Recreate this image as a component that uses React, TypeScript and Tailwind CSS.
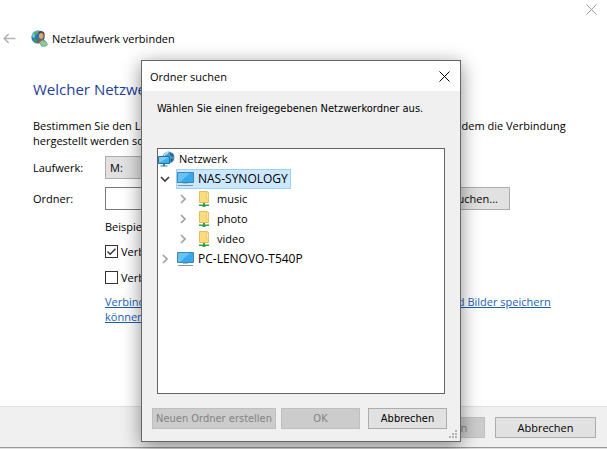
import clsx from 'clsx';
import type { ButtonHTMLAttributes } from 'react';

const CloseIcon = ({ className }: { className?: string }) => (
    <svg width="11" height="11" viewBox="0 0 11 11" fill="none" stroke="currentColor" className={className} aria-hidden="true">
        <path d="M.5.5l10 10M10.5.5l-10 10" />
    </svg>
);

const BackIcon = () => (
    <svg width="13" height="11" viewBox="0 0 13 11" fill="none" stroke="currentColor" strokeWidth="1.6" aria-hidden="true">
        <path d="M12.5 5.5H1.2M5.7 1L1.2 5.5l4.5 4.5" />
    </svg>
);

const MapDriveIcon = () => (
    <svg width="17" height="17" viewBox="0 0 17 17" aria-hidden="true">
        <circle cx="7" cy="7" r="6.6" fill="#2378b8" />
        <path d="M1 4.6C2.6 1.6 5.4.4 8 .6L6.6 3.4 4 5.2 3.6 8 1.6 7.4z" fill="#79c8e6" />
        <path d="M3 2.6l3-1.7 1.6 1.2L5 4.6 2.6 5.2z" fill="#58ad54" />
        <path d="M2 8.4l2.6.4 1.6 2-.6 2.4C3.6 12.6 2.2 10.8 2 8.4z" fill="#3f9a4a" />
        <path d="M7.4 4.2C7.6 1.6 9.2.8 11 1.2c2.2.4 3 2.2 2.6 4.6L12.4 9H8.6z" fill="#5f4634" />
        <ellipse cx="10.2" cy="6" rx="2.3" ry="3" fill="#d9a784" />
        <path d="M6.4 12c.4-2.4 1.6-3.2 3.4-3.2 2 0 4.2 1.2 4.8 3.4l-3 2.2z" fill="#a5533c" />
        <path d="M8.6 12.2l3-2.2 1.6 1.2 1.4-.2 2 3.8-2.6 1.6-3.6-.2z" fill="#8fc8a0" stroke="#5c9a70" strokeWidth=".6" />
    </svg>
);

const NetworkIcon = () => (
    <svg width="17" height="16" viewBox="0 0 17 16" aria-hidden="true">
        <circle cx="10.5" cy="6.5" r="6" fill="#4a9cc9" />
        <path d="M5.5 3.8C7 1.4 9 .6 11 .6L9.6 3l-2 .8L6.4 6z" fill="#b9dfee" />
        <path d="M11.6 2l3 .4 1.6 3-2 .4-1.8-1.4zM12.8 7.6l2.8.2-1.6 3.4-1.4-.8z" fill="#28658f" />
        <path d="M.5 5.5h11v7H.5z" fill="#3fb0f0" stroke="#256f9f" />
        <path d="M1 6h10L1 12z" fill="#7accf8" />
        <path d="M5 13h2v1.5h2.5v1h-7v-1H5z" fill="#3b7ea6" />
    </svg>
);

const ComputerIcon = () => (
    <svg width="17" height="16" viewBox="0 0 17 16" aria-hidden="true">
        <path d="M.5 1.5h16v10H.5z" fill="#35aaf0" stroke="#4585a8" />
        <path d="M1 2h12L3 11H1z" fill="#65c3f7" />
        <path d="M6 12h5v1H6z" fill="#9fc4d8" />
        <path d="M1 14.5h15" stroke="#7f98a6" />
    </svg>
);

const SharedFolderIcon = () => (
    <svg width="12" height="16" viewBox="0 0 12 16" aria-hidden="true">
        <path d="M1.5.5h7l2 1v10h-9z" fill="#fbdc7c" stroke="#e6bd55" />
        <path d="M8.5 1v6.5l2 1V1.5z" fill="#fdebaa" stroke="#e6bd55" strokeWidth=".7" />
        <path d="M5 12h2v1.5h4V15H7.5v1h-3v-1H1v-1.5h4z" fill="#35a14a" />
    </svg>
);

const Chevron = ({ open }: { open?: boolean }) => (
    <svg
        width="10"
        height="10"
        viewBox="0 0 10 10"
        fill="none"
        strokeWidth="1.7"
        className={open ? 'stroke-[#404040]' : 'stroke-[#a0a0a0]'}
        aria-hidden="true"
    >
        <path d={open ? 'M1 3l4 4 4-4' : 'M3 1l4 4-4 4'} />
    </svg>
);

const ResizeGrip = () => (
    <svg width="9" height="9" viewBox="0 0 9 9" fill="#b4b4b4" className="absolute right-0.5 bottom-0.5" aria-hidden="true">
        <path d="M6 0h2v2H6zM3 3h2v2H3zM6 3h2v2H6zM0 6h2v2H0zM3 6h2v2H3zM6 6h2v2H6z" />
    </svg>
);

const Button = ({ className, ...props }: ButtonHTMLAttributes<HTMLButtonElement>) => (
    <button
        type="button"
        className={clsx(
            'border border-[#adadad] bg-[#e1e1e1] whitespace-nowrap disabled:border-[#bfbfbf] disabled:bg-[#cccccc] disabled:text-[#838383]',
            className
        )}
        {...props}
    />
);

const shares = ['music', 'photo', 'video'];

const NetworkTree = () => (
    <ul className="h-[246px] border border-[#646464] bg-white leading-5">
        <li>
            <div className="flex items-center gap-1">
                <NetworkIcon />
                Netzwerk
            </div>
            <ul>
                <li>
                    <div className="flex items-center gap-1 pl-0.5 text-[12px]">
                        <Chevron open />
                        <div className="ml-0.5 flex h-5 items-center gap-1 border border-[#99d1ff] bg-[#cce8ff] pr-0.5">
                            <ComputerIcon />
                            NAS-SYNOLOGY
                        </div>
                    </div>
                    <ul>
                        {shares.map((share) => (
                            <li key={share} className="flex items-center gap-2 pl-5">
                                <Chevron />
                                <span className="flex items-center gap-[7px] pl-0.5">
                                    <SharedFolderIcon />
                                    {share}
                                </span>
                            </li>
                        ))}
                    </ul>
                </li>
                <li className="flex items-center gap-1 pl-0.5 text-[12px]">
                    <Chevron />
                    <span className="flex items-center gap-1 pl-[3px]">
                        <ComputerIcon />
                        PC-LENOVO-T540P
                    </span>
                </li>
            </ul>
        </li>
    </ul>
);

const BrowseDialog = () => (
    <div
        role="dialog"
        aria-labelledby="browse-title"
        className="absolute top-[60px] right-[5px] left-0 mx-auto w-[320px] border border-[#666666] bg-[#f0f0f0] shadow-[0_4px_18px_rgba(0,0,0,0.45)]"
    >
        <header className="flex h-[30px] items-center justify-between bg-white pr-2.5 pl-2">
            <h2 id="browse-title">Ordner suchen</h2>
            <button type="button" aria-label="Schließen">
                <CloseIcon />
            </button>
        </header>
        <div className="px-[15px] pt-2.5">
            <p className="h-[47px] font-['DejaVu_Sans_Condensed','DejaVu_Sans',sans-serif] leading-4">
                Wählen Sie einen freigegebenen Netzwerkordner aus.
            </p>
            <NetworkTree />
        </div>
        <footer className="flex px-2.5 pt-3.5 pb-3 font-['DejaVu_Sans_Condensed','DejaVu_Sans',sans-serif]">
            <Button disabled className="h-[21px] w-[124px]">
                Neuen Ordner erstellen
            </Button>
            <Button disabled className="ml-[5px] h-[21px] w-[79px]">
                OK
            </Button>
            <Button className="ml-2 h-[21px] w-[79px]">Abbrechen</Button>
        </footer>
        <ResizeGrip />
    </div>
);

const Checkbox = ({ label, defaultChecked }: { label: string; defaultChecked?: boolean }) => (
    <label className="flex items-center gap-[3px]">
        <span className="grid">
            <input
                type="checkbox"
                defaultChecked={defaultChecked}
                className="peer col-start-1 row-start-1 size-[13px] appearance-none border border-[#333333] bg-white"
            />
            <svg
                width="13"
                height="13"
                viewBox="0 0 13 13"
                fill="none"
                stroke="#333333"
                strokeWidth="1.4"
                className="pointer-events-none invisible col-start-1 row-start-1 peer-checked:visible"
                aria-hidden="true"
            >
                <path d="M2.5 6.5l2.7 2.7 5.3-5.4" />
            </svg>
        </span>
        {label}
    </label>
);

export default function App() {
    return (
        <div className="relative flex min-h-screen flex-col bg-white font-['Open_Sans','Noto_Sans',sans-serif] text-[11px] leading-[15px] text-black">
            <div className="flex h-[30px] justify-end pt-1 pr-2.5">
                <button type="button" aria-label="Schließen" className="h-[11px] text-[#999999]">
                    <CloseIcon />
                </button>
            </div>
            <header className="flex h-[17px] items-center gap-[15px] pl-[3px]">
                <button type="button" aria-label="Zurück" className="text-[#b4b4b4]">
                    <BackIcon />
                </button>
                <h1 className="flex items-center gap-1">
                    <MapDriveIcon />
                    Netzlaufwerk verbinden
                </h1>
            </header>
            <main className="flex-1 px-[33px] pt-8">
                <h2 className="text-[15px] leading-5 text-[#1e3f98]">Welcher Netzwerkordner soll zugeordnet werden?</h2>
                <p className="pt-[19px]">
                    Bestimmen Sie den Laufwerkbuchstaben für die Verbindung sowie den Ordner, mit dem die Verbindung
                    hergestellt werden soll:
                </p>
                <div className="grid grid-cols-[72px_1fr] items-center gap-y-2 pt-2">
                    <label htmlFor="drive">Laufwerk:</label>
                    <select id="drive" className="h-[23px] w-[240px] appearance-none border border-[#adadad] bg-[#e1e1e1] pl-1">
                        <option>M:</option>
                    </select>
                    <label htmlFor="folder">Ordner:</label>
                    <div className="flex gap-3">
                        <input id="folder" type="text" className="h-[23px] w-[292px] border border-[#7a7a7a] bg-white px-1" />
                        <Button className="h-[23px] w-[101px]">Durchsuchen...</Button>
                    </div>
                    <div className="col-start-2 pt-px">
                        <p>Beispiel: \\Server\Freigabe</p>
                        <div className="flex flex-col gap-[11px] pt-2.5">
                            <Checkbox label="Verbindung bei Anmeldung wiederherstellen" defaultChecked />
                            <Checkbox label="Verbindung mit anderen Anmeldedaten herstellen" />
                        </div>
                        <p className="pt-[9px]">
                            <a href="#website" className="text-[#1a5fb8] underline">
                                Verbindung mit einer Webseite herstellen, auf der Sie Dokumente und Bilder speichern können
                            </a>
                        </p>
                    </div>
                </div>
            </main>
            <footer className="flex h-[41px] items-center justify-end gap-2.5 border-t border-[#dfdfdf] bg-[#f0f0f0] pr-[11px]">
                <Button disabled className="h-[21px] w-[101px]">
                    Fertig stellen
                </Button>
                <Button className="h-[21px] w-[101px]">Abbrechen</Button>
            </footer>
            <div className="h-0.5 border-t border-[#999999] bg-[#e0e0e0]" />
            <BrowseDialog />
        </div>
    );
}
